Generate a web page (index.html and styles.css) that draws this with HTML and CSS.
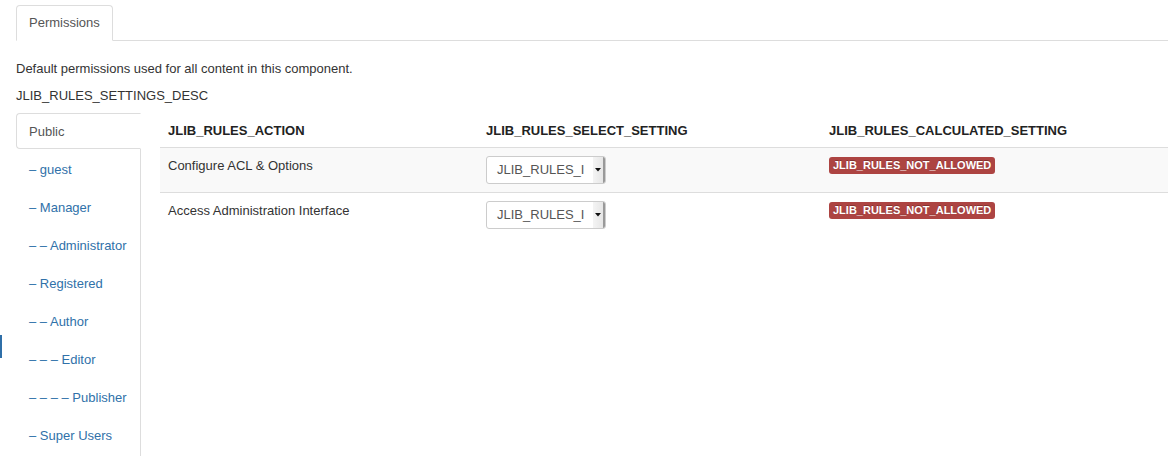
FILE: index.html
```html
<!DOCTYPE html>
<html>
<head>
<meta charset="utf-8">
<link rel="stylesheet" href="styles.css">
</head>
<body>
<div class="page">
  <ul class="tabs">
    <li class="tab active">Permissions</li>
  </ul>
  <p class="desc">Default permissions used for all content in this component.</p>
  <p class="desc last">JLIB_RULES_SETTINGS_DESC</p>
  <div class="tabs-left">
    <ul class="side-nav">
      <li class="side-item active">Public</li>
      <li class="side-item"><a>– guest</a></li>
      <li class="side-item"><a>– Manager</a></li>
      <li class="side-item"><a>– – Administrator</a></li>
      <li class="side-item"><a>– Registered</a></li>
      <li class="side-item"><a>– – Author</a></li>
      <li class="side-item"><a>– – – Editor</a></li>
      <li class="side-item"><a>– – – – Publisher</a></li>
      <li class="side-item"><a>– Super Users</a></li>
    </ul>
    <div class="pane">
      <table class="rules">
        <thead>
          <tr>
            <th class="c1">JLIB_RULES_ACTION</th>
            <th class="c2">JLIB_RULES_SELECT_SETTING</th>
            <th class="c3">JLIB_RULES_CALCULATED_SETTING</th>
          </tr>
        </thead>
        <tbody>
          <tr class="odd">
            <td><span class="cell-text">Configure ACL &amp; Options</span></td>
            <td><div class="select"><span class="sel-text">JLIB_RULES_INHERITED</span><span class="sel-btn"><svg width="6" height="4" viewBox="0 0 6 4"><path d="M0 0H6L3 3.5Z" fill="#111"/></svg></span></div></td>
            <td><span class="label">JLIB_RULES_NOT_ALLOWED</span></td>
          </tr>
          <tr>
            <td><span class="cell-text">Access Administration Interface</span></td>
            <td><div class="select"><span class="sel-text">JLIB_RULES_INHERITED</span><span class="sel-btn"><svg width="6" height="4" viewBox="0 0 6 4"><path d="M0 0H6L3 3.5Z" fill="#111"/></svg></span></div></td>
            <td><span class="label">JLIB_RULES_NOT_ALLOWED</span></td>
          </tr>
        </tbody>
      </table>
    </div>
  </div>
  <div class="focus-bar"></div>
</div>
</body>
</html>
```
FILE: styles.css
```css
html, body {
  margin: 0;
  padding: 0;
  background: #fff;
}
body {
  font-family: "Liberation Sans", Arial, Helvetica, sans-serif;
  font-size: 13px;
  line-height: 18px;
  color: #333;
  overflow: hidden;
  width: 1168px;
  height: 466px;
}
.page {
  position: relative;
  padding: 5px 0 0 16px;
}
.tabs {
  list-style: none;
  margin: 0 0 19px 0;
  padding: 0;
  display: flex;
  border-bottom: 1px solid #ddd;
}
.tab {
  padding: 8px 12px;
  line-height: 18px;
  border: 1px solid transparent;
  border-radius: 4px 4px 0 0;
  margin-bottom: -1px;
  color: #555;
}
.tab.active {
  border-color: #ddd #ddd transparent #ddd;
  background: #fff;
}
.desc {
  margin: 0 0 9px 0;
}
.desc.last {
  margin-bottom: 8px;
}
.tabs-left {
  display: flex;
  align-items: flex-start;
}
.side-nav {
  list-style: none;
  margin: 0 19px 0 0;
  padding: 0 0 3px 0;
  width: 124px;
  border-right: 1px solid #ddd;
  flex: none;
  display: flex;
  flex-direction: column;
  gap: 2px;
}
.side-item {
  padding: 9px 12px 7px;
  line-height: 18px;
  border: 1px solid transparent;
  margin-right: -1px;
  border-radius: 4px 0 0 4px;
  white-space: nowrap;
  color: #555;
}
.side-item.active {
  border-color: #ddd transparent #ddd #ddd;
  background: #fff;
}
.side-item a {
  color: #3071a9;
  text-decoration: none;
}
.pane {
  flex: 1;
  min-width: 0;
}
.rules {
  border-collapse: collapse;
  border-spacing: 0;
  width: 1100px;
}
.rules th, .rules td {
  padding: 8px;
  text-align: left;
  vertical-align: top;
  line-height: 18px;
}
.rules th {
  font-weight: bold;
  color: #222;
  padding-top: 9px;
  padding-bottom: 7px;
}
.rules td {
  border-top: 1px solid #ddd;
}
.rules thead tr {
  border-bottom: 1px solid #ddd;
}
.cell-text {
  display: block;
  padding-top: 1px;
}
.c1 { width: 302px; }
.c2 { width: 327px; }
.rules tr.odd td {
  background: #f9f9f9;
}
.select {
  display: flex;
  width: 120px;
  height: 28px;
  box-sizing: border-box;
  border: 1px solid #ccc;
  border-radius: 3px;
  background: #fff;
  overflow: hidden;
}
.sel-text {
  flex: none;
  overflow: hidden;
  white-space: nowrap;
  padding: 4px 0 0 10px;
  color: #555;
  width: 87px;
}
.sel-btn {
  width: 12px;
  margin-left: auto;
  display: flex;
  align-items: center;
  justify-content: center;
  background: linear-gradient(to right, #f4f4f4, #e6e6e6);
  border-right: 2px solid #999;
  box-sizing: border-box;
}
.label {
  display: inline-block;
  font-size: 11px;
  font-weight: bold;
  line-height: 14px;
  padding: 1px 4px 2px;
  color: #fff;
  background: #ad4442;
  border-radius: 3px;
  text-shadow: 0 -1px 0 rgba(0,0,0,0.25);
  white-space: nowrap;
}
.focus-bar {
  position: absolute;
  left: 0;
  top: 335px;
  width: 2px;
  height: 23px;
  background: #2f6fa8;
}
```
